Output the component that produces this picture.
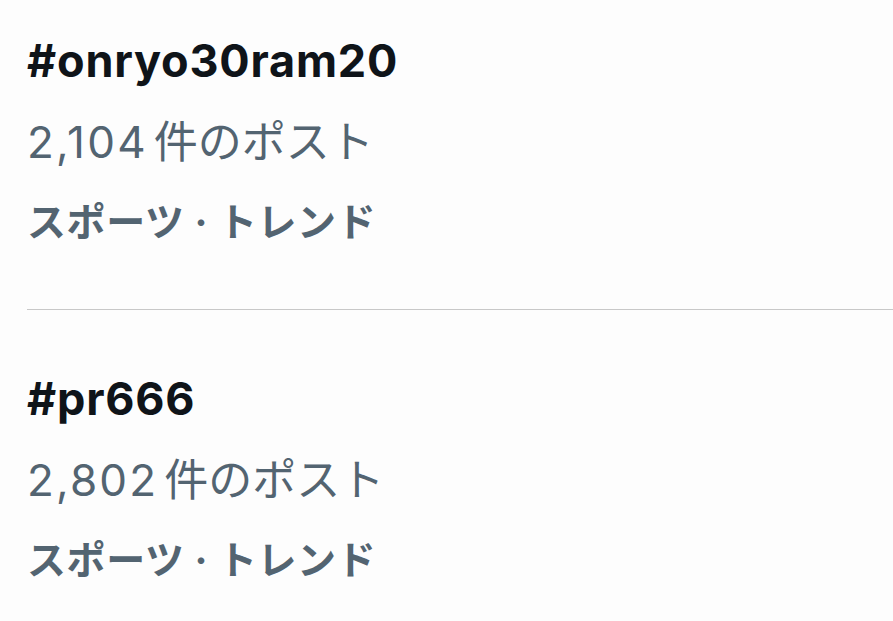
const TRENDS = [
  { tag: "#onryo30ram20", count: "2,104", category: "スポーツ · トレンド" },
  { tag: "#pr666", count: "2,802", category: "スポーツ · トレンド" },
];

const FONT = "font-['Inter','Noto_Sans_CJK_JP',sans-serif]";

export default function App() {
  return (
    <div className={`min-h-[621px] w-[893px] overflow-hidden bg-[#fdfdfd] ${FONT}`}>
      {TRENDS.map((t, i) => (
        <div key={t.tag}>
          {i > 0 && <div className="ml-[27px] h-px bg-[#c8c8c8]" />}
          <div className={`pl-[27px] ${i > 0 ? "pt-[48px]" : "pt-[20px]"} pb-[47px]`}>
            <div className="text-[45px] leading-[82px] font-bold tracking-[0.8px] text-[#0f1419]">{t.tag}</div>
            <div className="text-[44px] leading-[80px] text-[#536471]">
              <span className="tracking-[2.2px]">{t.count}</span>
              <span className="ml-[6px]">件のポスト</span>
            </div>
            <div className="text-[39px] leading-[80px] font-bold tracking-[0.6px] text-[#536471]">{t.category}</div>
          </div>
        </div>
      ))}
    </div>
  );
}
